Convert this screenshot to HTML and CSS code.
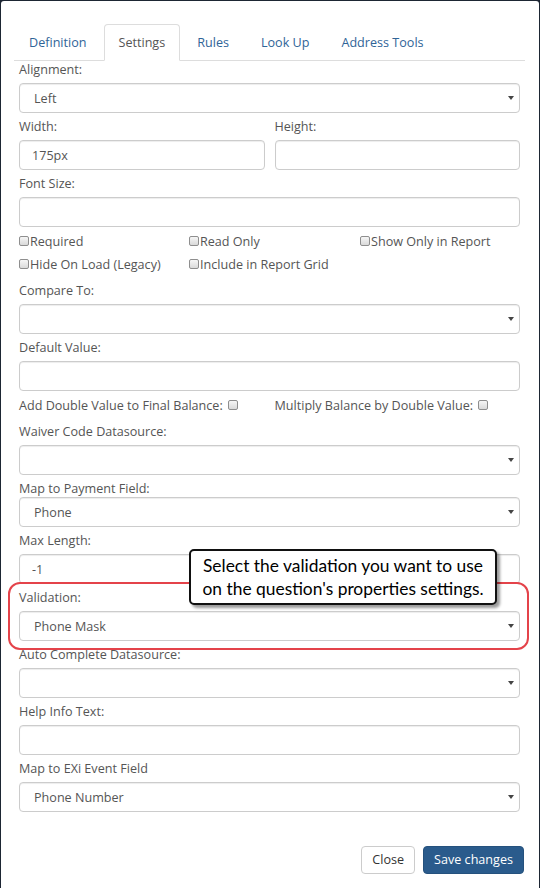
FILE: index.html
```html
<!DOCTYPE html>
<html lang="en">
<head>
    <meta charset="UTF-8">
    <meta name="viewport" content="width=device-width, initial-scale=1.0">
    <title>Question Properties</title>
    <link rel="stylesheet" href="styles.css">
</head>
<body>
    <div class="modal">
        <div class="modal-body">
            <ul class="nav-tabs">
                <li><a href="#">Definition</a></li>
                <li class="active"><a href="#">Settings</a></li>
                <li><a href="#">Rules</a></li>
                <li><a href="#">Look Up</a></li>
                <li><a href="#">Address Tools</a></li>
            </ul>

            <form class="settings-form">
                <div class="form-group">
                    <label>Alignment:</label>
                    <div class="select-wrap">
                        <select class="form-control"><option>Left</option></select>
                    </div>
                </div>

                <div class="two-cols">
                    <div class="form-group">
                        <label>Width:</label>
                        <input class="form-control" type="text" value="175px">
                    </div>
                    <div class="form-group">
                        <label>Height:</label>
                        <input class="form-control" type="text">
                    </div>
                </div>

                <div class="form-group">
                    <label>Font Size:</label>
                    <input class="form-control" type="text">
                </div>

                <div class="check-grid">
                    <label class="check"><input type="checkbox">Required</label>
                    <label class="check"><input type="checkbox">Read Only</label>
                    <label class="check"><input type="checkbox">Show Only in Report</label>
                    <label class="check"><input type="checkbox">Hide On Load (Legacy)</label>
                    <label class="check"><input type="checkbox">Include in Report Grid</label>
                </div>

                <div class="form-group">
                    <label>Compare To:</label>
                    <div class="select-wrap">
                        <select class="form-control"><option></option></select>
                    </div>
                </div>

                <div class="form-group">
                    <label>Default Value:</label>
                    <input class="form-control" type="text">
                </div>

                <div class="two-cols check-line">
                    <label class="check after">Add Double Value to Final Balance:<input type="checkbox"></label>
                    <label class="check after">Multiply Balance by Double Value:<input type="checkbox"></label>
                </div>

                <div class="form-group">
                    <label>Waiver Code Datasource:</label>
                    <div class="select-wrap">
                        <select class="form-control"><option></option></select>
                    </div>
                </div>

                <div class="form-group tight">
                    <label>Map to Payment Field:</label>
                    <div class="select-wrap">
                        <select class="form-control"><option>Phone</option></select>
                    </div>
                </div>

                <div class="form-group">
                    <label>Max Length:</label>
                    <input class="form-control" type="text" value="-1">
                </div>

                <div class="form-group highlighted">
                    <label>Validation:</label>
                    <div class="select-wrap">
                        <select class="form-control"><option>Phone Mask</option></select>
                    </div>
                    <div class="highlight"></div>
                    <div class="callout">
                        <span>Select the validation you want to use</span>
                        <span>on the question's properties settings.</span>
                    </div>
                </div>

                <div class="form-group">
                    <label>Auto Complete Datasource:</label>
                    <div class="select-wrap">
                        <select class="form-control"><option></option></select>
                    </div>
                </div>

                <div class="form-group">
                    <label>Help Info Text:</label>
                    <input class="form-control" type="text">
                </div>

                <div class="form-group">
                    <label>Map to EXi Event Field</label>
                    <div class="select-wrap">
                        <select class="form-control"><option>Phone Number</option></select>
                    </div>
                </div>
            </form>
        </div>

        <div class="modal-footer">
            <button class="btn btn-default" type="button">Close</button>
            <button class="btn btn-primary" type="button">Save changes</button>
        </div>
    </div>
</body>
</html>
```

FILE: styles.css
```css
body {
    margin: 0;
    background-color: #1d2633;
    font-family: "Open Sans", "Segoe UI", Arial, sans-serif;
    font-size: 12.6px;
    color: #555;
}

.modal {
    margin: 1px 1px 0 1px;
    min-height: 887px;
    background-color: #fff;
    border-radius: 3px 3px 0 0;
}

.modal-body {
    padding: 23px 14px 0 13px;
}

/* tabs */
.nav-tabs {
    list-style: none;
    margin: 0;
    padding: 0;
    display: flex;
    border-bottom: 1px solid #ddd;
}

    .nav-tabs li {
        margin-right: 2px;
        margin-bottom: -1px;
    }

    .nav-tabs a {
        display: block;
        padding: 9px 14px;
        line-height: 17px;
        border: 1px solid transparent;
        border-radius: 4px 4px 0 0;
        color: #2f6497;
        text-decoration: none;
    }

    .nav-tabs .active a {
        color: #555;
        background-color: #fff;
        border-color: #ddd #ddd transparent;
    }

/* form */
.settings-form {
    padding: 0 5px;
}

.form-group {
    margin-bottom: 5px;
}

    .form-group:last-child {
        margin-bottom: 0;
    }

    .form-group label {
        display: block;
        line-height: 17px;
        margin-bottom: 5px;
    }

    .form-group.tight label {
        margin-bottom: 0;
    }

.form-control {
    display: block;
    width: 100%;
    height: 30px;
    box-sizing: border-box;
    margin: 0;
    padding: 4px 12px;
    font: inherit;
    color: #555;
    background-color: #fff;
    border: 1px solid #ccc;
    border-radius: 4px;
    box-shadow: inset 0 1px 1px rgba(0, 0, 0, 0.075);
    outline: none;
}

select.form-control {
    appearance: none;
    -webkit-appearance: none;
    padding-left: 14px;
}

.select-wrap {
    position: relative;
}

    .select-wrap::after {
        content: "";
        position: absolute;
        right: 6px;
        top: 13px;
        border-left: 3px solid transparent;
        border-right: 3px solid transparent;
        border-top: 4px solid #444;
    }

.two-cols {
    display: grid;
    grid-template-columns: 1fr 1fr;
    column-gap: 10px;
}

/* checkboxes */
.check-grid {
    display: grid;
    grid-template-columns: 170px 171px 1fr;
    row-gap: 3px;
    line-height: 20px;
    margin-bottom: 7px;
}

.check-line {
    line-height: 20px;
    margin: 1px 0 7px;
}

.check {
    display: flex;
    align-items: center;
    white-space: nowrap;
}

    .check input {
        appearance: none;
        -webkit-appearance: none;
        width: 10px;
        height: 10px;
        margin: 0 1px 2px 0;
        border: 1px solid #8e8e8e;
        border-radius: 2px;
        background: linear-gradient(#f6f6f6, #dadada);
        flex: none;
    }

    .check.after input {
        margin: 0 0 2px 5px;
    }

/* callout over the validation field */
.highlighted {
    position: relative;
}

.highlight {
    position: absolute;
    top: -7px;
    left: -11px;
    right: -9px;
    bottom: -9px;
    border: 2px solid #e4434a;
    border-radius: 12px;
    z-index: 1;
}

.callout {
    position: absolute;
    left: 170px;
    top: -40px;
    width: 308px;
    height: 56px;
    box-sizing: border-box;
    display: flex;
    flex-direction: column;
    justify-content: center;
    align-items: center;
    background-color: #fff;
    border: 2px solid #111;
    border-radius: 5px;
    box-shadow: 3px 3px 3px rgba(0, 0, 0, 0.4);
    font-family: Lato, "Open Sans", sans-serif;
    font-size: 17.4px;
    line-height: 23px;
    color: #000;
    z-index: 2;
}

/* footer */
.modal-footer {
    display: flex;
    justify-content: flex-end;
    gap: 8px;
    padding: 34px 15px 0;
}

.btn {
    font: inherit;
    line-height: 18px;
    padding: 4px 10px;
    border: 1px solid;
    border-radius: 4px;
    cursor: pointer;
}

.btn-default {
    color: #333;
    background-color: #fff;
    border-color: #ccc;
}

.btn-primary {
    color: #fff;
    background-color: #2a5b8c;
    border-color: #25517d;
}
```
